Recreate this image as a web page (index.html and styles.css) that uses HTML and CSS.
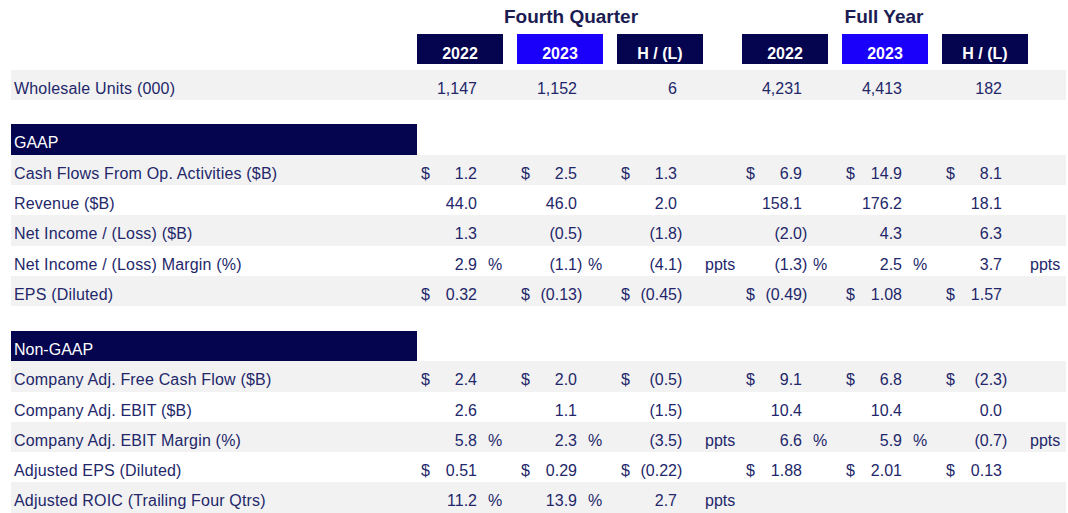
FILE: index.html
```html
<!DOCTYPE html>
<html lang="en">
<head>
<meta charset="utf-8">
<title>Financial Summary</title>
<link rel="stylesheet" href="styles.css">
</head>
<body>
<div class="sheet">
  <div class="grid titles">
    <div class="title q">Fourth Quarter</div>
    <div class="title fy">Full Year</div>
  </div>
  <div class="grid heads">
    <div class="hbox c1">2022</div>
    <div class="hbox c2 cur-yr">2023</div>
    <div class="hbox c3">H / (L)</div>
    <div class="hbox c4">2022</div>
    <div class="hbox c5 cur-yr">2023</div>
    <div class="hbox c6">H / (L)</div>
  </div>

  <div class="grid row band first">
    <div class="lbl">Wholesale Units (000)</div>
    <div class="v c1"><span class="num">1,147</span></div>
    <div class="v c2"><span class="num">1,152</span></div>
    <div class="v c3"><span class="num">6</span></div>
    <div class="v c4"><span class="num">4,231</span></div>
    <div class="v c5"><span class="num">4,413</span></div>
    <div class="v c6"><span class="num">182</span></div>
  </div>

  <div class="section">GAAP</div>
  <div class="grid row band">
    <div class="lbl">Cash Flows From Op. Activities ($B)</div>
    <div class="v c1"><span class="cur">$</span><span class="num">1.2</span></div>
    <div class="v c2"><span class="cur">$</span><span class="num">2.5</span></div>
    <div class="v c3"><span class="cur">$</span><span class="num">1.3</span></div>
    <div class="v c4"><span class="cur">$</span><span class="num">6.9</span></div>
    <div class="v c5"><span class="cur">$</span><span class="num">14.9</span></div>
    <div class="v c6"><span class="cur">$</span><span class="num">8.1</span></div>
  </div>
  <div class="grid row">
    <div class="lbl">Revenue ($B)</div>
    <div class="v c1"><span class="num">44.0</span></div>
    <div class="v c2"><span class="num">46.0</span></div>
    <div class="v c3"><span class="num">2.0</span></div>
    <div class="v c4"><span class="num">158.1</span></div>
    <div class="v c5"><span class="num">176.2</span></div>
    <div class="v c6"><span class="num">18.1</span></div>
  </div>
  <div class="grid row band">
    <div class="lbl">Net Income / (Loss) ($B)</div>
    <div class="v c1"><span class="num">1.3</span></div>
    <div class="v c2"><span class="num">(0.5<span class="cp">)</span></span></div>
    <div class="v c3"><span class="num">(1.8<span class="cp">)</span></span></div>
    <div class="v c4"><span class="num">(2.0<span class="cp">)</span></span></div>
    <div class="v c5"><span class="num">4.3</span></div>
    <div class="v c6"><span class="num">6.3</span></div>
  </div>
  <div class="grid row">
    <div class="lbl">Net Income / (Loss) Margin (%)</div>
    <div class="v c1"><span class="num">2.9</span><span class="unit pct">%</span></div>
    <div class="v c2"><span class="num">(1.1<span class="cp">)</span></span><span class="unit pct">%</span></div>
    <div class="v c3"><span class="num">(4.1<span class="cp">)</span></span><span class="unit ppts">ppts</span></div>
    <div class="v c4"><span class="num">(1.3<span class="cp">)</span></span><span class="unit pct">%</span></div>
    <div class="v c5"><span class="num">2.5</span><span class="unit pct">%</span></div>
    <div class="v c6"><span class="num">3.7</span><span class="unit ppts">ppts</span></div>
  </div>
  <div class="grid row band">
    <div class="lbl">EPS (Diluted)</div>
    <div class="v c1"><span class="cur">$</span><span class="num">0.32</span></div>
    <div class="v c2"><span class="cur">$</span><span class="num">(0.13<span class="cp">)</span></span></div>
    <div class="v c3"><span class="cur">$</span><span class="num">(0.45<span class="cp">)</span></span></div>
    <div class="v c4"><span class="cur">$</span><span class="num">(0.49<span class="cp">)</span></span></div>
    <div class="v c5"><span class="cur">$</span><span class="num">1.08</span></div>
    <div class="v c6"><span class="cur">$</span><span class="num">1.57</span></div>
  </div>

  <div class="section second">Non-GAAP</div>
  <div class="grid row band">
    <div class="lbl">Company Adj. Free Cash Flow ($B)</div>
    <div class="v c1"><span class="cur">$</span><span class="num">2.4</span></div>
    <div class="v c2"><span class="cur">$</span><span class="num">2.0</span></div>
    <div class="v c3"><span class="cur">$</span><span class="num">(0.5<span class="cp">)</span></span></div>
    <div class="v c4"><span class="cur">$</span><span class="num">9.1</span></div>
    <div class="v c5"><span class="cur">$</span><span class="num">6.8</span></div>
    <div class="v c6"><span class="cur">$</span><span class="num">(2.3<span class="cp">)</span></span></div>
  </div>
  <div class="grid row">
    <div class="lbl">Company Adj. EBIT ($B)</div>
    <div class="v c1"><span class="num">2.6</span></div>
    <div class="v c2"><span class="num">1.1</span></div>
    <div class="v c3"><span class="num">(1.5<span class="cp">)</span></span></div>
    <div class="v c4"><span class="num">10.4</span></div>
    <div class="v c5"><span class="num">10.4</span></div>
    <div class="v c6"><span class="num">0.0</span></div>
  </div>
  <div class="grid row band">
    <div class="lbl">Company Adj. EBIT Margin (%)</div>
    <div class="v c1"><span class="num">5.8</span><span class="unit pct">%</span></div>
    <div class="v c2"><span class="num">2.3</span><span class="unit pct">%</span></div>
    <div class="v c3"><span class="num">(3.5<span class="cp">)</span></span><span class="unit ppts">ppts</span></div>
    <div class="v c4"><span class="num">6.6</span><span class="unit pct">%</span></div>
    <div class="v c5"><span class="num">5.9</span><span class="unit pct">%</span></div>
    <div class="v c6"><span class="num">(0.7<span class="cp">)</span></span><span class="unit ppts">ppts</span></div>
  </div>
  <div class="grid row">
    <div class="lbl">Adjusted EPS (Diluted)</div>
    <div class="v c1"><span class="cur">$</span><span class="num">0.51</span></div>
    <div class="v c2"><span class="cur">$</span><span class="num">0.29</span></div>
    <div class="v c3"><span class="cur">$</span><span class="num">(0.22<span class="cp">)</span></span></div>
    <div class="v c4"><span class="cur">$</span><span class="num">1.88</span></div>
    <div class="v c5"><span class="cur">$</span><span class="num">2.01</span></div>
    <div class="v c6"><span class="cur">$</span><span class="num">0.13</span></div>
  </div>
  <div class="grid row band">
    <div class="lbl">Adjusted ROIC (Trailing Four Qtrs)</div>
    <div class="v c1"><span class="num">11.2</span><span class="unit pct">%</span></div>
    <div class="v c2"><span class="num">13.9</span><span class="unit pct">%</span></div>
    <div class="v c3"><span class="num">2.7</span><span class="unit ppts">ppts</span></div>
  </div>
</div>
</body>
</html>
```

FILE: styles.css
```css
html, body {
  margin: 0;
  padding: 0;
  background: #ffffff;
}

body {
  font-family: "Liberation Sans", Arial, sans-serif;
  font-size: 16px;
  color: #23276a;
  overflow: hidden;
}

.sheet {
  width: 1055px;
  margin-left: 11px;
}

.grid {
  display: grid;
  grid-template-columns: 406px 100px 100px 100px 25px 100px 100px 100px 24px;
}

.c1 { grid-column: 2; }
.c2 { grid-column: 3; }
.c3 { grid-column: 4; }
.c4 { grid-column: 6; }
.c5 { grid-column: 7; }
.c6 { grid-column: 8; }

/* Titles */
.titles {
  height: 34px;
}

.title {
  font-weight: bold;
  font-size: 19px;
  line-height: 33px;
  color: #1b1c52;
  text-align: center;
  white-space: nowrap;
}

.title.q {
  grid-column: 2 / 5;
  padding-left: 8px;
}

.title.fy {
  grid-column: 6 / 9;
  padding-right: 16px;
}

/* Column header boxes */
.heads {
  height: 30px;
}

.hbox {
  width: 86px;
  height: 30px;
  box-sizing: border-box;
  padding-top: 9px;
  line-height: 22px;
  background: #04044f;
  color: #ffffff;
  font-weight: bold;
  font-size: 16px;
  text-align: center;
  white-space: nowrap;
}

.hbox.cur-yr {
  background: #1a00fb;
}

/* Data rows */
.row {
  height: 30.3px;
  box-sizing: border-box;
  padding-top: 8px;
  line-height: 22px;
}

.row.first {
  margin-top: 6px;
}

.band {
  background: #f2f2f2;
}

.lbl {
  grid-column: 1;
  padding-left: 3px;
  letter-spacing: 0.18px;
  white-space: nowrap;
}

.v {
  display: grid;
  grid-template-columns: 10px 46px auto;
  padding-left: 4px;
  white-space: nowrap;
}

.cur {
  grid-column: 1;
}

.num {
  grid-column: 2;
  text-align: right;
}

.cp {
  margin-right: -0.333em;
}

.unit {
  grid-column: 3;
}

.unit.pct {
  margin-left: 11px;
}

.unit.ppts {
  margin-left: 28px;
}

/* Section headers */
.section {
  width: 406px;
  height: 30.5px;
  box-sizing: border-box;
  margin-top: 24px;
  padding-top: 8px;
  padding-left: 3px;
  line-height: 22px;
  background: #04044f;
  color: #ffffff;
}

.section.second {
  margin-top: 24.5px;
}
```
